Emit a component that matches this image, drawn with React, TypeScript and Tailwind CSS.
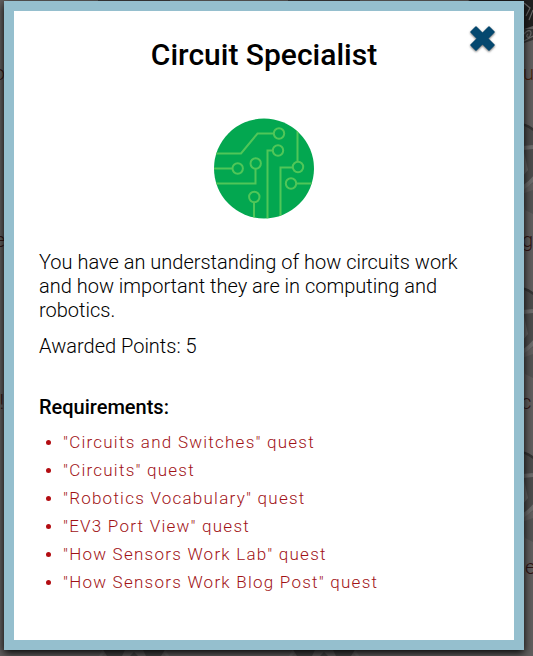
const requirements = [
  '"Circuits and Switches" quest',
  '"Circuits" quest',
  '"Robotics Vocabulary" quest',
  '"EV3 Port View" quest',
  '"How Sensors Work Lab" quest',
  '"How Sensors Work Blog Post" quest',
];

function CircuitBadge() {
  return (
    <svg width="100" height="101" viewBox="0 0 100 101" fill="none">
      <defs>
        <clipPath id="badge">
          <circle cx="50" cy="50.5" r="50" />
        </clipPath>
      </defs>
      <circle cx="50" cy="50.5" r="50" fill="#03a750" />
      <g clipPath="url(#badge)" stroke="#50c658" strokeWidth="2">
        <path d="M0 35.5H27L43.5 15.5H60M0 50.5H18.5M0 65.5H41.5V51M53.5 101V32.5H58.5M66.5 101V49.5H78.5M83.5 0V43.5M83 65.5H100M40 101V84" />
        <circle cx="65" cy="15.5" r="5.2" />
        <circle cx="64" cy="32.5" r="5.2" />
        <circle cx="23.7" cy="50.5" r="5.2" />
        <circle cx="41.7" cy="45.5" r="5.2" />
        <circle cx="84" cy="49" r="5.2" />
        <circle cx="77" cy="65.5" r="5.2" />
        <circle cx="40.3" cy="79" r="5.2" />
      </g>
    </svg>
  );
}

function CloseIcon() {
  return (
    <svg width="28" height="28" viewBox="0 0 28 28" className="drop-shadow-[0_1px_1px_rgba(0,0,0,0.6)]">
      <path
        d="M7 2L13.5 8.5L20 2L25 7L18.5 13.5L25 20L20 25L13.5 18.5L7 25L2 20L8.5 13.5L2 7Z"
        fill="#05486f"
        stroke="#05486f"
        strokeWidth="1.5"
        strokeLinejoin="round"
      />
    </svg>
  );
}

// dimmed page that shows around the dialog
function Backdrop() {
  return (
    <div className="absolute inset-0 -z-10 flex justify-between bg-[#605e5e] text-[20px] leading-6 font-light text-[#301515]">
      <svg width="533" height="656" className="absolute inset-0" fill="none">
        {[156, 320, 484].map((y) => (
          <g key={y}>
            <circle cx="514" cy={y} r="33" fill="#4c4c4c" />
            <path d={`M514 ${y - 33}A33 33 0 0 1 536 ${y - 24}`} stroke="#343434" strokeWidth="2.5" />
            <path d={`M523 ${y - 8}L533 ${y - 9}`} stroke="#6c6c6c" strokeWidth="4" />
            <path d={`M524 ${y - 4}L528 ${y + 14}L523 ${y + 20}Z`} fill="#676767" />
            <path d={`M514 ${y + 35}Q525 ${y + 33} 535 ${y + 21}`} stroke="#6c6c6c" strokeWidth="4" />
            <path d={`M522 ${y + 38}L533 ${y + 34}V${y + 58}L525 ${y + 54}Z`} fill="#535353" />
          </g>
        ))}
        {[134, 324].map((x) => (
          <g key={x}>
            <circle cx={x} cy="674" r="38" stroke="#686868" strokeWidth="3" />
            <path d={`M${x - 32} 648H${x - 8}L${x - 12} 656H${x - 27}ZM${x + 8} 648H${x + 32}L${x + 27} 656H${x + 12}ZM${x} 652L${x + 4} 656H${x - 4}Z`} fill="#454545" />
            <path d={`M${x - 36} 0H${x + 36}`} stroke="#3d3d3d" strokeWidth="2" />
          </g>
        ))}
        <path d="M468 0H533V26L524 29Z" fill="#202020" />
        <path d="M524 29H533V40L524 43Z" fill="#353535" />
        <path d="M524 3L530 8L526 16M533 10L529 20M524 34C529 28 533 31 530 36C528 39 525 36 528 34M524 41L533 36" stroke="#696969" strokeWidth="1.2" />
      </svg>

      <div className="relative flex w-1 flex-col items-end pt-[61px]">
        <span className="-mr-px h-[167px]">o</span>
        <span className="-mr-px h-[162px]">e</span>
        <span>!</span>
      </div>
      <div className="relative flex w-3 flex-col pt-[61px]">
        <span className="h-[167px] pl-0.5 text-[#4a2410]">u</span>
        <span className="h-[162px] pl-px">g</span>
        <span className="h-[165px]">c</span>
        <span className="pl-1">e</span>
      </div>
    </div>
  );
}

export default function App() {
  return (
    <div className="relative isolate h-[656px] w-[533px] overflow-hidden pt-px pl-1 font-[Roboto,sans-serif] text-black">
      <Backdrop />

      <div className="h-[649px] w-[520px] border-10 border-[#95bfce] bg-white px-[25px] shadow-[0_3px_8px_rgba(0,0,0,0.95)]">
        <header className="relative pt-[26px]">
          <h1 className="text-center text-[30px] leading-9 font-medium">Circuit Specialist</h1>
          <button className="absolute top-3.5 -right-2" aria-label="Close">
            <CloseIcon />
          </button>
        </header>

        <div className="mt-[45px] flex justify-center">
          <CircuitBadge />
        </div>

        <div className="mt-[31px] text-[20px] leading-6 font-light">
          <p>You have an understanding of how circuits work and how important they are in computing and robotics.</p>
          <p className="mt-3">Awarded Points: 5</p>
        </div>

        <h2 className="mt-[37px] text-[20px] leading-6 font-medium">Requirements:</h2>

        <ul className="mt-[9px] pl-[7px] text-[17px] leading-7 font-light tracking-[1.24px] text-[#a11216]">
          {requirements.map((item) => (
            <li key={item} className="flex items-center gap-3">
              <span className="size-[5px] rounded-full bg-[#b30d12]" />
              {item}
            </li>
          ))}
        </ul>
      </div>
    </div>
  );
}
